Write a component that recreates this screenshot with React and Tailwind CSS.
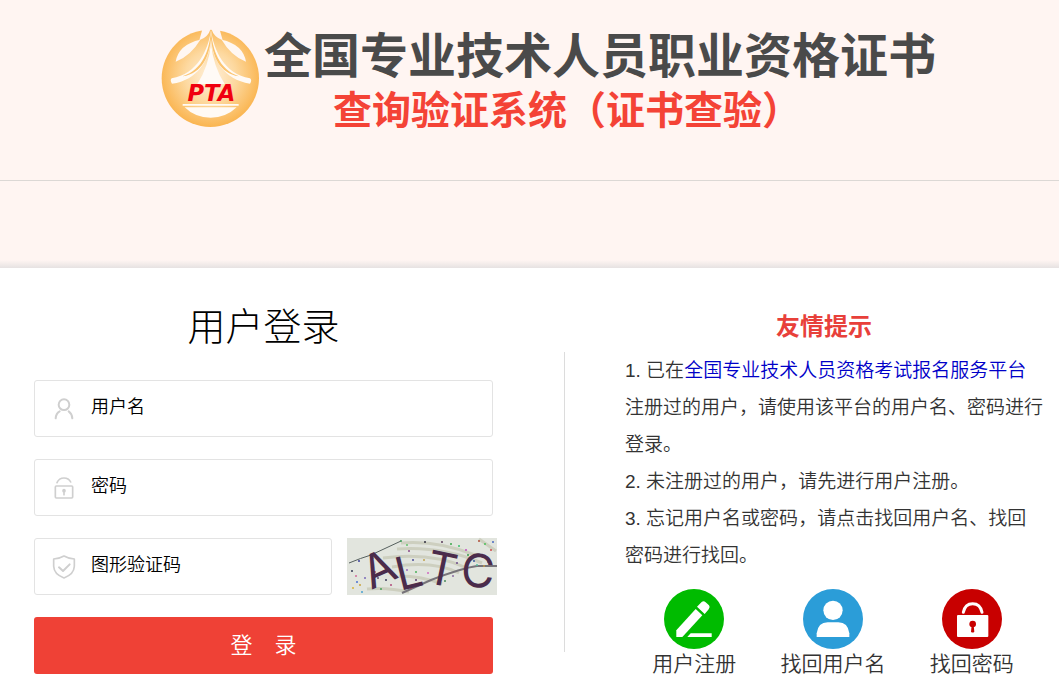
const inputClass = 'min-w-0 flex-1 bg-transparent pb-1 text-lg font-[350] text-black outline-none placeholder:text-black placeholder:opacity-100'
const fieldClass = 'flex h-[57px] items-center gap-[15px] rounded-[3px] border border-[#e3e3e3] bg-white px-[17px]'

const captchaDots = [
    [6, 50, '#d8b23a'], [10, 44, '#4a6fd0'], [5, 33, '#333a55'], [12, 23, '#3b3f9a'], [13, 47, '#c8a23c'], [18, 40, '#7a6ab8'],
    [31, 40, '#5a4a70'], [39, 42, '#3a3a5a'], [44, 47, '#b04a7a'], [34, 51, '#4aa05a'], [28, 34, '#d05a6a'], [15, 54, '#4aa0d0'],
    [54, 3, '#3fa05a'], [60, 7, '#62c06a'], [62, 13, '#8a4a8a'], [78, 4, '#2f2f3f'], [95, 4, '#5a3a5a'], [104, 6, '#3aa84a'],
    [112, 8, '#3ac06a'], [119, 12, '#c04ac0'], [121, 17, '#3a9a4a'], [132, 3, '#b0503a'], [138, 6, '#4ac05a'], [144, 12, '#d04a4a'],
    [141, 24, '#7a6a9a'], [127, 23, '#3a5aa0'], [130, 27, '#5ac0a0'], [137, 28, '#c09a4a'], [66, 22, '#4a4a9a'], [60, 32, '#9a6ac0'],
    [69, 34, '#4ab05a'], [81, 35, '#d06ac0'], [69, 42, '#5a3a6a'], [77, 22, '#c0a04a'], [98, 43, '#4a8a5a'], [106, 38, '#8a6aa0'],
    [64, 50, '#c04a5a'], [110, 25, '#6a4a8a'], [146, 4, '#4a6ac0'], [26, 20, '#b08a9a'], [38, 30, '#d0904a'], [9, 38, '#d06a9a']
]

function LogoMark() {
    return (
        <svg className="h-[99px] w-[99px] shrink-0" viewBox="35 42 297 297" aria-hidden="true">
            <defs>
                <radialGradient id="gold" cx="50%" cy="48%" r="52%">
                    <stop offset="0" stopColor="#fff0dc" />
                    <stop offset="0.5" stopColor="#fdd9a0" />
                    <stop offset="1" stopColor="#fab551" />
                </radialGradient>
            </defs>
            <circle cx="183" cy="190" r="146" fill="url(#gold)" />
            <path d="M161 36 L150 76 Q180 65 185 36 Z M209 36 L220 76 Q190 65 185 36 Z" fill="#fff5f2" />
            <path d="M153 74 Q88 88 79 140 Q124 123 153 74 Z M217 74 Q281 88 290 140 Q245 123 217 74 Z" fill="#fff7f2" />
            <path d="M185 44 C177 105 145 176 67 190 Q61 196 68 206 C146 196 179 132 185 80 C191 132 222 192 302 206 Q309 196 302 190 C224 176 193 105 185 44 Z" fill="#fffaf5" />
            <path d="M185 43 C181 105 161 164 100 184 C160 176 180 120 185 72 C190 120 209 176 269 184 C209 164 189 105 185 43 Z" fill="#fbc470" />
            <path d="M185 85 Q178 155 144 207 H226 Q192 155 185 85 Z" fill="#fffaf6" />
            <path d="M100 267 H268 V272 H100 Z M106 277 H262 Q230 308 184 308 Q137 308 106 277 Z" fill="#fffaf5" />
            <text x="186" y="259" textAnchor="middle" fontFamily="DejaVu Sans" fontWeight="700" fontStyle="italic" fontSize="68" fill="#f0000f">PTA</text>
        </svg>
    )
}

function Captcha() {
    return (
        <svg className="h-[57px] w-[150px] shrink-0 overflow-visible" viewBox="0 0 150 57" role="img" aria-label="图形验证码">
            <rect width="150" height="57" fill="#e2e5de" />
            <g fill="none" stroke="#cdcfbf" strokeWidth="3">
                <path d="M54 5 Q90 2 128 17" />
                <path d="M50 11 Q95 8 135 25" />
                <path d="M36 20 Q85 14 120 30" />
                <path d="M45 29 Q85 22 112 35" />
                <path d="M52 38 Q75 38 95 46" />
                <path d="M20 51 Q40 49 62 54" />
                <path d="M132 1 L149 13" />
            </g>
            <path d="M2 25 Q14 20 24 17 L54 3" fill="none" stroke="#56605e" strokeWidth="1" />
            <path d="M55 55 L84 42 Q115 30 130 28 H150" fill="none" stroke="#77747a" strokeWidth="2" />
            {captchaDots.map(([x, y, color], i) => (
                <circle key={i} cx={x} cy={y} r="1" fill={color} />
            ))}
            <g fontFamily="Inter" fontSize="46" fill="#4b2c4b">
                <text transform="translate(24 52) rotate(-24)">A</text>
                <text transform="translate(53 53) rotate(-14)">L</text>
                <text transform="translate(77 44) rotate(12)">T</text>
                <text transform="translate(113 48) rotate(4)">C</text>
            </g>
        </svg>
    )
}

function UserIcon() {
    return (
        <svg className="h-6 w-6 shrink-0" viewBox="96 78 72 72" fill="none" stroke="#cfcfcf" strokeWidth="6" strokeLinecap="round" aria-hidden="true">
            <circle cx="132" cy="101" r="16" />
            <path d="M107 142 Q108 127 119 121 M146 121 Q156 128 157 142" />
        </svg>
    )
}

function LockIcon() {
    return (
        <svg className="h-6 w-6 shrink-0" viewBox="96 317 72 72" fill="none" stroke="#cfcfcf" strokeWidth="5" strokeLinecap="round" aria-hidden="true">
            <rect x="106" y="347" width="52" height="36" rx="3" />
            <path d="M111 337 Q117 323 132 323 Q146 323 152 335" />
            <circle cx="132" cy="361" r="3" fill="#cfcfcf" />
            <path d="M132 362 V373" />
        </svg>
    )
}

function ShieldIcon() {
    return (
        <svg className="h-6 w-6 shrink-0" viewBox="96 555 72 72" fill="none" stroke="#cfcfcf" strokeWidth="5" strokeLinecap="round" strokeLinejoin="round" aria-hidden="true">
            <path d="M132 558 Q146 566 163 567 V589 Q162 613 132 624 Q102 613 101 589 V567 Q118 566 132 558 Z" />
            <path d="M117 592 L129 603 L149 583" strokeWidth="6" />
        </svg>
    )
}

const shortcuts = [
    {
        label: '用户注册',
        icon: (
            <svg className="h-[60px] w-[60px]" viewBox="75 27 180 180" aria-hidden="true">
                <circle cx="165" cy="117" r="90" fill="#0b0" />
                <path d="M112 151 L170 87 L190 106 L130 171 H112 Z" fill="#fff" />
                <path d="M174 80 L188 66 Q194 61 200 67 L210 76 Q215 82 209 88 L197 102 Z" fill="#fff" />
                <path d="M155 160 H218 V171 H145 Z" fill="#fff" />
            </svg>
        )
    },
    {
        label: '找回用户名',
        icon: (
            <svg className="h-[60px] w-[60px]" viewBox="489 27 180 180" aria-hidden="true">
                <circle cx="579" cy="117" r="90" fill="#2b9dd8" />
                <circle cx="579" cy="91" r="29" fill="#fff" />
                <path d="M530 171 V160 Q534 127 563 127 H595 Q624 127 628 160 V171 Z" fill="#fff" />
            </svg>
        )
    },
    {
        label: '找回密码',
        icon: (
            <svg className="h-[60px] w-[60px]" viewBox="903 27 180 180" aria-hidden="true">
                <circle cx="993" cy="117" r="90" fill="#c80000" />
                <path d="M967 97 Q972 71 995 71 Q1018 71 1023 97" fill="none" stroke="#fff" strokeWidth="9" strokeLinecap="round" />
                <rect x="948" y="105" width="94" height="66" rx="3" fill="#fff" />
                <circle cx="995" cy="132" r="10" fill="#c80000" />
                <path d="M992 136 H998 L1000 155 Q995 160 990 155 Z" fill="#c80000" />
            </svg>
        )
    }
]

export default function App() {
    return (
        <div className="min-h-screen bg-white font-['Liberation_Sans','Noto_Sans_CJK_SC',sans-serif]">
            <header className="flex h-[181px] justify-center gap-1 border-b border-[#dcd8d5] bg-[#fff5f2] pt-[29px] pl-[38px]">
                <LogoMark />
                <h1 className="pt-0.5 font-bold whitespace-nowrap">
                    <span className="block text-[48px] leading-[52px] text-[#4a4a4a]">全国专业技术人员职业资格证书</span>
                    <span className="block pl-[69px] text-[39px] leading-[56px] text-[#f44336]">查询验证系统（证书查验）</span>
                </h1>
            </header>
            <div className="flex h-[87px] flex-col justify-end bg-[#fff5f2]">
                <div className="h-2 bg-linear-to-b from-[#fff5f2] to-[#e6e2e2]"></div>
            </div>

            <main className="flex pt-[35px]">
                {/* Formulario de acceso */}
                <form className="min-w-0 flex-1 pr-[71px] pl-[34px]" onSubmit={(e) => e.preventDefault()}>
                    <h2 className="text-center text-[38px] leading-[48px] font-light text-black">用户登录</h2>
                    <div className="mt-[29px] flex flex-col gap-[22px]">
                        <label className={fieldClass}>
                            <UserIcon />
                            <input type="text" placeholder="用户名" aria-label="用户名" className={inputClass} />
                        </label>
                        <label className={fieldClass}>
                            <LockIcon />
                            <input type="password" placeholder="密码" aria-label="密码" className={inputClass} />
                        </label>
                        <div className="-mr-1 flex gap-[15px]">
                            <label className={`${fieldClass} min-w-0 flex-1`}>
                                <ShieldIcon />
                                <input type="text" placeholder="图形验证码" aria-label="图形验证码" className={inputClass} />
                            </label>
                            <Captcha />
                        </div>
                        <button type="submit" className="h-[57px] rounded-[3px] bg-[#ef4136] text-[22px] font-[350] text-white">登　录</button>
                    </div>
                </form>

                <div className="mt-[49px] h-[300px] w-px bg-[#dcdcdc]"></div>

                {/* Avisos y accesos directos */}
                <section className="w-[494px] shrink-0 pl-[60px]">
                    <h2 className="pr-9 text-center text-2xl leading-[48px] font-bold text-[#e8403a]">友情提示</h2>
                    <div className="pt-px text-[19px] leading-[37px] font-[350] whitespace-nowrap text-[#333]">
                        <p>
                            1. 已在<a href="#platform" className="text-[#0000c8]">全国专业技术人员资格考试报名服务平台</a>
                            <br />
                            注册过的用户，请使用该平台的用户名、密码进行
                            <br />
                            登录。
                        </p>
                        <p>2. 未注册过的用户，请先进行用户注册。</p>
                        <p>
                            3. 忘记用户名或密码，请点击找回用户名、找回
                            <br />
                            密码进行找回。
                        </p>
                    </div>
                    <nav className="mt-[15px] grid grid-cols-3 pr-[18px]">
                        {shortcuts.map(({ label, icon }) => (
                            <a key={label} href="#shortcut" className="flex flex-col items-center text-[21px] leading-[30px] font-[350] text-[#333]">
                                {icon}
                                {label}
                            </a>
                        ))}
                    </nav>
                </section>
            </main>
        </div>
    )
}
